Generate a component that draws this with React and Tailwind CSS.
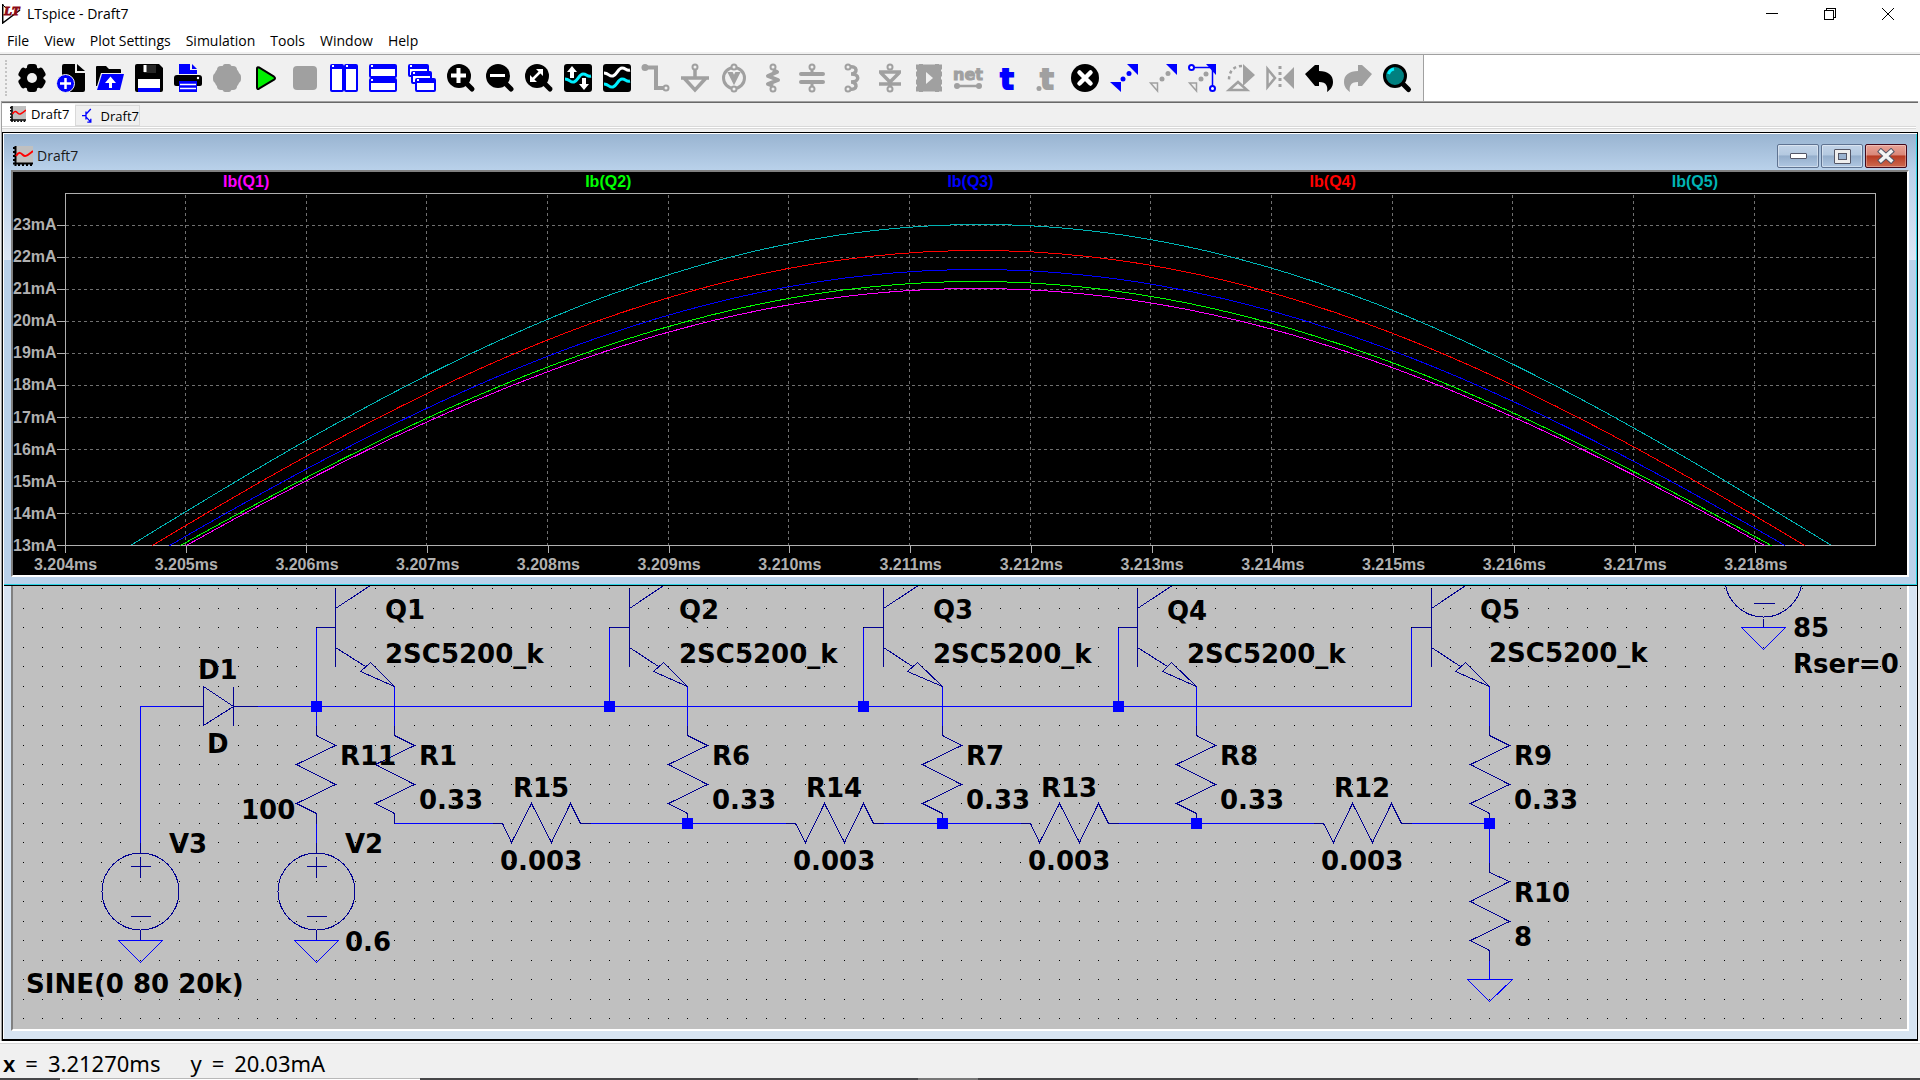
import { useState } from "react";
import clsx from "clsx";

const MENU = ["File", "View", "Plot Settings", "Simulation", "Tools", "Window", "Help"];

const INK = "#000";
const BLUE = "#0000ff";
const OFF = "#a0a0a0";
const NAVY = "#000090";

/* ── Toolbar icons, each on a 28 x 28 box ─────────────── */

const Magnifier = ({ children }) => (
  <>
    <path d="M17 17 25 25" stroke={INK} strokeWidth="5" strokeLinecap="round" />
    <circle cx="12" cy="12" r="12" fill={INK} />
    {children}
  </>
);

const SmallWindow = ({ x, y, w, h }) => (
  <>
    <rect x={x} y={y} width={w} height={h} rx="1" fill="#fff" stroke={BLUE} strokeWidth="2" />
    <path d={`M${x} ${y + 2}h${w}`} stroke={BLUE} strokeWidth="4" />
    <path d={`M${x + 1} ${y + 1}h2`} stroke="#fff" strokeWidth="2" />
  </>
);

const Pin = ({ x, y }) => (
  <circle cx={x} cy={y} r="2.5" fill="#f0f0f0" stroke={OFF} strokeWidth="2" />
);

const TOOLS = [
  {
    name: "Settings",
    art: (
      <>
        <circle cx="14" cy="14" r="11.5" />
        <rect x="9" width="10" height="28" rx="3" />
        <rect x="9" width="10" height="28" rx="3" transform="rotate(60 14 14)" />
        <rect x="9" width="10" height="28" rx="3" transform="rotate(120 14 14)" />
        <circle cx="14" cy="14" r="5" fill="#f0f0f0" />
      </>
    ),
  },
  {
    name: "New schematic",
    art: (
      <>
        <path d="M7 0h11v9h10v17a2 2 0 0 1-2 2H7a2 2 0 0 1-2-2V2a2 2 0 0 1 2-2z" />
        <path d="M20 0 28 7h-8z" />
        <circle cx="8.500" cy="19.500" r="9" fill={BLUE} stroke="#f0f0f0" />
        <path d="M8.500 14v11M3 19.500h11" stroke="#fff" strokeWidth="2.500" />
      </>
    ),
  },
  {
    name: "Open",
    art: (
      <>
        <path d="M0 3a1 1 0 0 1 1-1h9l3 3h11a1 1 0 0 1 1 1v3H5L1 22H0z" />
        <path d="M6 10h22l-4 16H1z" fill={BLUE} />
        <path d="M14.500 12.500 20 19h-4v5h-3v-5H9z" fill="#fff" />
      </>
    ),
  },
  {
    name: "Save",
    art: (
      <>
        <path d="M2 0h22l4 4v22a2 2 0 0 1-2 2H2a2 2 0 0 1-2-2V2a2 2 0 0 1 2-2z" />
        <path d="M9 1h12v8H9z" fill="#fff" opacity=".15" />
        <path d="M10 1v7" stroke="#fff" strokeWidth="3" />
        <path d="M3 15h22v9H3z" fill="#fff" />
        <path d="M3 24h22v4H3z" fill={BLUE} />
      </>
    ),
  },
  {
    name: "Print",
    art: (
      <>
        <path d="M5 0h11v6h7v4H5z" fill={BLUE} />
        <path d="M18 0 23 5h-5z" fill={BLUE} />
        <path d="M3 11h22a3 3 0 0 1 3 3v6a2 2 0 0 1-2 2H2a2 2 0 0 1-2-2v-6a3 3 0 0 1 3-3z" />
        <path d="M5 17h18v11H5z" fill={BLUE} />
        <path d="M6 20.500h16M6 24.500h16" stroke="#fff" strokeWidth="1.500" />
        <circle cx="24" cy="14" r="1.200" fill="#fff" />
      </>
    ),
  },
  {
    name: "Pause",
    art: (
      <g fill={OFF}>
        <circle cx="14" cy="14" r="13" />
        <rect x="4" y="2" width="20" height="24" rx="4" />
        <rect x="10" y="0" width="8" height="28" rx="2" />
        <rect x="0" y="9" width="28" height="10" rx="4" />
      </g>
    ),
  },
  {
    name: "Run",
    art: (
      <path
        d="M5 4.500v19q0 2 2 1.200l15-9q2-1.500 0-3L7 3.500q-2-.8-2 1z"
        fill="#00f000"
        stroke={INK}
        strokeWidth="2"
      />
    ),
  },
  { name: "Stop", art: <rect x="2" y="2" width="24" height="24" rx="4" fill={OFF} /> },
  {
    name: "Tile vertically",
    art: (
      <>
        <SmallWindow x={1} y={1} w={12} h={26} />
        <SmallWindow x={15} y={1} w={12} h={26} />
      </>
    ),
  },
  {
    name: "Tile horizontally",
    art: (
      <>
        <SmallWindow x={1} y={1} w={26} h={12} />
        <SmallWindow x={1} y={15} w={26} h={12} />
      </>
    ),
  },
  {
    name: "Cascade",
    art: (
      <>
        <SmallWindow x={1} y={1} w={19} h={11} />
        <SmallWindow x={4} y={8} w={19} h={11} />
        <SmallWindow x={8} y={15} w={19} h={12} />
      </>
    ),
  },
  {
    name: "Zoom in",
    art: (
      <Magnifier>
        <path d="M11.500 4v15M4 11.500h15" stroke="#fff" strokeWidth="4" />
      </Magnifier>
    ),
  },
  {
    name: "Zoom out",
    art: (
      <Magnifier>
        <path d="M4 11.500h15" stroke="#fff" strokeWidth="3" />
      </Magnifier>
    ),
  },
  {
    name: "Zoom to fit",
    art: (
      <Magnifier>
        <path d="M7 16 16 7" stroke="#fff" strokeWidth="2.500" />
        <path d="M11 5h7v7zM5 11v7h7z" fill="#fff" />
      </Magnifier>
    ),
  },
  {
    name: "Autorange",
    art: (
      <>
        <rect width="28" height="28" rx="3" />
        <path d="M1 15c5 0 5 4 9 3s5-8 9-8 4 3 8 2" fill="none" stroke="#00f0ff" strokeWidth="3" />
        <path d="M8 2l5 6h-3v6H6V8H3zM20 26l-5-6h3v-6h4v6h3z" fill="#fff" />
      </>
    ),
  },
  {
    name: "Plot traces",
    art: (
      <>
        <rect width="28" height="28" rx="3" />
        <path d="M1 9c5 0 5 4 9 3s5-8 9-8 4 3 8 2" fill="none" stroke="#fff" strokeWidth="3" />
        <path d="M1 20c5 0 5 4 9 3s5-8 9-8 4 3 8 2" fill="none" stroke="#00f0ff" strokeWidth="3" />
      </>
    ),
  },
  {
    name: "Wire",
    art: (
      <>
        <path d="M3 3.500h11V24h8" fill="none" stroke={OFF} strokeWidth="4" />
        <circle cx="3" cy="3.500" r="3.500" fill={OFF} />
        <Pin x={24} y={24} />
      </>
    ),
  },
  {
    name: "Ground",
    art: (
      <>
        <path d="M14 5v9M0 14h28M3 14 14 26 25 14" fill="none" stroke={OFF} strokeWidth="3.500" />
        <Pin x={14} y={3} />
      </>
    ),
  },
  {
    name: "Voltage",
    art: (
      <>
        <circle cx="14" cy="14" r="10.500" fill="none" stroke={OFF} strokeWidth="3" />
        <path d="M9 9l5 10 5-10h-3l-2 4-2-4z" fill={OFF} stroke={OFF} strokeWidth="2" />
        <Pin x={14} y={3} />
        <Pin x={14} y={25} />
      </>
    ),
  },
  {
    name: "Resistor",
    art: (
      <>
        <path d="M14 6 18 8 9 12 19 16 9 20 14 22" fill="none" stroke={OFF} strokeWidth="4" strokeLinejoin="round" />
        <Pin x={14} y={3} />
        <Pin x={14} y={25} />
      </>
    ),
  },
  {
    name: "Capacitor",
    art: (
      <>
        <path d="M3 10h22M3 18h22" stroke={OFF} strokeWidth="4" strokeLinecap="round" />
        <path d="M14 5v5M14 18v5" stroke={OFF} strokeWidth="3" />
        <Pin x={14} y={3} />
        <Pin x={14} y={25} />
      </>
    ),
  },
  {
    name: "Inductor",
    art: (
      <>
        <path d="M12 3c9-2 9 7 2 7 9 0 9 8 0 8 7 0 7 9-2 7" fill="none" stroke={OFF} strokeWidth="3.500" />
        <Pin x={11} y={3} />
        <Pin x={11} y={25} />
      </>
    ),
  },
  {
    name: "Diode",
    art: (
      <>
        <path d="M3 8h22M5 9l9 9 9-9M3 20h22M14 18v5" fill="none" stroke={OFF} strokeWidth="3.500" />
        <Pin x={14} y={3} />
        <Pin x={14} y={25} />
      </>
    ),
  },
  {
    name: "Component",
    art: (
      <>
        <path d="M2 2h24v24H2z" fill={OFF} />
        <path d="M1 3h26M1 10h26M1 18h26M1 25h26" stroke={OFF} strokeWidth="5" />
        <path d="M4 0h4v28H4zM20 0h4v28h-4z" fill={OFF} />
        <path d="M11 8v12l7-6z" fill="#f0f0f0" />
      </>
    ),
  },
  {
    name: "Label net",
    art: (
      <>
        <text x="14" y="16" textAnchor="middle" fill={OFF} fontSize="16" fontWeight="700" fontFamily="DejaVu Sans, sans-serif" stroke={OFF}>
          net
        </text>
        <path d="M3 22h22" stroke={OFF} strokeWidth="2.500" />
        <circle cx="3" cy="22" r="3" fill={OFF} />
        <circle cx="25" cy="22" r="3" fill={OFF} />
      </>
    ),
  },
  {
    name: "Text",
    art: (
      <text x="14" y="25" textAnchor="middle" fill={BLUE} stroke={BLUE} strokeWidth="2" fontSize="28" fontWeight="700" fontFamily="DejaVu Sans, sans-serif">
        t
      </text>
    ),
  },
  {
    name: "SPICE directive",
    art: (
      <>
        <text x="15" y="25" textAnchor="middle" fill={OFF} stroke={OFF} strokeWidth="2" fontSize="28" fontWeight="700" fontFamily="DejaVu Sans, sans-serif">
          t
        </text>
        <circle cx="7" cy="24.500" r="2.500" fill={OFF} />
      </>
    ),
  },
  {
    name: "Delete",
    art: (
      <>
        <circle cx="14" cy="14" r="14" />
        <path d="M8.500 8.500l11 11M19.500 8.500l-11 11" stroke="#fff" strokeWidth="4.500" strokeLinecap="round" />
      </>
    ),
  },
  {
    name: "Move",
    art: (
      <g fill={BLUE}>
        <path d="M17 0h11v11zM0 18h11v10z" />
        <circle cx="13" cy="15" r="2.500" />
        <circle cx="19" cy="9.500" r="2.500" />
      </g>
    ),
  },
  {
    name: "Copy",
    art: (
      <>
        <path d="M17 0h11v11z" fill={BLUE} />
        <path d="M1.500 19h7v8z" fill="none" stroke={OFF} strokeWidth="1.500" />
        <circle cx="13" cy="15" r="2.500" fill={OFF} />
        <circle cx="19" cy="9.500" r="2.500" fill={OFF} />
      </>
    ),
  },
  {
    name: "Drag",
    art: (
      <>
        <path d="M18 0h10v11z" fill={BLUE} />
        <path d="M3 3.500h21.500V24" fill="none" stroke={BLUE} strokeWidth="1.500" />
        <circle cx="3.500" cy="3.500" r="2.500" fill="#fff" stroke={BLUE} strokeWidth="2" />
        <circle cx="24.500" cy="24.500" r="2.500" fill="#fff" stroke={BLUE} strokeWidth="2" />
        <path d="M1.500 19h7v8z" fill="none" stroke={OFF} strokeWidth="1.500" />
        <circle cx="13" cy="15" r="2.500" fill={OFF} />
        <circle cx="18" cy="10" r="2.500" fill={OFF} />
      </>
    ),
  },
  {
    name: "Rotate",
    art: (
      <>
        <path d="M16 0 28 11 16 22z" fill={OFF} />
        <path d="M2 26 11 18l9 8z" fill="none" stroke={OFF} strokeWidth="2.500" />
        <path d="M15 2C7 2 2 7 2 16" fill="none" stroke={OFF} strokeWidth="2.500" strokeDasharray="3 3" />
      </>
    ),
  },
  {
    name: "Mirror",
    art: (
      <>
        <path d="M1.500 5v18L9 14z" fill="none" stroke={OFF} strokeWidth="2.500" />
        <path d="M28 3v22L17 14z" fill={OFF} />
        <path d="M14 2v24" stroke={OFF} strokeWidth="3" strokeDasharray="3 3" />
      </>
    ),
  },
  {
    name: "Undo",
    art: <path d="M0 10 10 1h4v6c9 0 14 4 14 11 0 5-3 8-6 10 1-5 0-10-8-10v4h-4z" />,
  },
  {
    name: "Redo",
    art: <path d="M28 10 18 1h-4v6C5 7 0 11 0 18c0 5 3 8 6 10-1-5 0-10 8-10v4h4z" fill={OFF} />,
  },
  {
    name: "Search",
    art: (
      <>
        <path d="M19 19 25.500 25.500" stroke={INK} strokeWidth="5" strokeLinecap="round" />
        <circle cx="12" cy="12" r="10.500" fill="#008080" stroke={INK} strokeWidth="3" />
        <path d="M5.500 10A7 7 0 0 1 11 5" fill="none" stroke="#00f0ff" strokeWidth="3" />
      </>
    ),
  },
];

const PlotIcon = ({ className }) => (
  <svg viewBox="0 0 20 20" className={className} aria-hidden="true">
    <path d="M3 0h17v17H3z" fill="#c0c0c0" />
    <path d="M2.500 0v20M0 17.500h20" stroke="#000" strokeWidth="2" fill="none" />
    <path d="M0 2h2M0 6h2M0 10h2M0 14h2M6 18v2M10 18v2M14 18v2M18 18v2" stroke="#000" strokeWidth="2" />
    <path d="M3 10c3-5 5-3 7-1s4 1 10-4" stroke="#f00" strokeWidth="2" fill="none" />
  </svg>
);

const NpnIcon = () => (
  <svg viewBox="0 0 12 16" className="w-3 h-4" fill="none" stroke={BLUE} strokeWidth="1.500" aria-hidden="true">
    <path d="M0 7.500h4M4.500 3v9M4.500 6 10 0M4.500 9 10 15M10 11v4H6" />
  </svg>
);

/* ── Waveform pane ────────────────────────────────────── */

const PLOT_W = 1811;
const PLOT_H = 353;

// y = top + a·d² − b·d⁴, d being the distance from the crest
const TRACES = [
  { label: "Ib(Q5)", color: "#00b4b4", cx: 916, top: 31, half: 850, a: 5.259e-4, b: 1.135e-10 },
  { label: "Ib(Q4)", color: "#ff0000", cx: 913.5, top: 57, half: 826.5, a: 5.002e-4, b: 9.96e-11 },
  { label: "Ib(Q3)", color: "#0000ff", cx: 912.3, top: 76, half: 808, a: 4.883e-4, b: 9.99e-11 },
  { label: "Ib(Q2)", color: "#00ff00", cx: 910.8, top: 88, half: 795.8, a: 4.868e-4, b: 1.1e-10 },
  { label: "Ib(Q1)", color: "#ff00ff", cx: 910.5, top: 95, half: 789.5, a: 4.722e-4, b: 9.56e-11 },
];

const LEGEND = [
  { label: "Ib(Q1)", className: "text-[#ff00ff]" },
  { label: "Ib(Q2)", className: "text-[#00ff00]" },
  { label: "Ib(Q3)", className: "text-[#0000ff]" },
  { label: "Ib(Q4)", className: "text-[#ff0000]" },
  { label: "Ib(Q5)", className: "text-[#00b4b4]" },
];

const AMPS = [23, 22, 21, 20, 19, 18, 17, 16, 15, 14, 13];
const TIMES = Array.from({ length: 15 }, (_, i) => (3.204 + i / 1000).toFixed(3));

function tracePoints({ cx, top, half, a, b }) {
  const steps = 60;
  return Array.from({ length: steps + 1 }, (_, i) => {
    const d = -half + (2 * half * i) / steps;
    const y = top + 0.5 + a * d * d - b * d ** 4;
    return `${(cx + d).toFixed(1)},${y.toFixed(1)}`;
  }).join(" ");
}

function Waveforms() {
  return (
    <svg
      viewBox={`0 0 ${PLOT_W} ${PLOT_H}`}
      preserveAspectRatio="none"
      className="block w-full h-full"
      shapeRendering="crispEdges"
      fill="none"
      role="img"
      aria-label="Base currents of Q1 to Q5"
    >
      <g stroke="#707070" strokeDasharray="3 3">
        {AMPS.slice(0, -1).map((mA, i) => (
          <path key={mA} d={`M1 ${32.5 + i * 32}H${PLOT_W}`} />
        ))}
        {TIMES.slice(1).map((t, i) => (
          <path key={t} d={`M${Math.floor((i + 1) * 120.65) + 0.5} 2V${PLOT_H}`} />
        ))}
      </g>
      <rect x="0.5" y="0.5" width={PLOT_W - 1} height={PLOT_H - 1} stroke="#b0b0b0" />
      {TRACES.map((trace) => (
        <polyline key={trace.label} points={tracePoints(trace)} stroke={trace.color} />
      ))}
    </svg>
  );
}

function PlotPane() {
  return (
    <div className="flex-1 min-h-0 flex flex-col bg-black pr-[31px] font-['Liberation_Sans',Arial,sans-serif] font-bold text-base leading-4 text-[#b0b0b0]">
      <div className="h-[21px] ml-[52px] grid grid-cols-5 pt-[2px] text-center">
        {LEGEND.map((item) => (
          <span key={item.label} className={item.className}>
            {item.label}
          </span>
        ))}
      </div>
      <div className="flex-1 min-h-0 flex">
        <div className="w-[52px] pt-6 -mb-2 flex flex-col justify-between">
          {AMPS.map((mA) => (
            <div key={mA} className="h-4 flex items-center justify-between">
              <span>{mA}mA</span>
              <span className="w-2 h-px bg-[#b0b0b0]" />
            </div>
          ))}
        </div>
        <div className="flex-1 min-w-0">
          <Waveforms />
        </div>
      </div>
      <div className="h-[29px] ml-[52px] grid grid-cols-15">
        {TIMES.map((t) => (
          <div key={t} className="w-px flex flex-col items-center gap-1">
            <span className="w-px h-[7px] bg-[#b0b0b0]" />
            <span>{t}ms</span>
          </div>
        ))}
      </div>
    </div>
  );
}

/* ── Schematic pane ───────────────────────────────────── */

// grid column / row -> pixel centre inside the sheet
const gx = (k) => Math.floor(10.1 + 19.555 * k) + 0.5;
const gy = (j) => Math.floor(2.75 + 19.545 * j) + 0.5;
const line = (...pts) => "M" + pts.map(([k, j]) => `${gx(k)} ${gy(j)}`).join("L");

const DOTS = Array.from({ length: 23 }, (_, j) =>
  Array.from({ length: 97 }, (_, k) => `M${gx(k) - 0.5} ${gy(j)}h1`).join("")
).join("");

const ZIGZAG = [[0, 0], [0, 0.5], [1, 1], [-1, 2], [1, 3], [-1, 4], [0, 4.5], [0, 5]];

const Resistor = ({ k, j, flat }) => (
  <path d={line(...ZIGZAG.map(([s, t]) => (flat ? [k + t, j - s] : [k + s, j + t])))} />
);

const Transistor = ({ k, j }) => (
  <>
    <path d={line([k, j], [k + 1, j])} />
    <path d={line([k + 1, j - 2], [k + 1, j + 2])} />
    <path d={line([k + 1, j - 1], [k + 4, j - 3])} />
    <path d={line([k + 1, j + 1.03], [k + 2.5, j + 2])} />
    <path d={line([k + 2.75, j + 1.78], [k + 2.25, j + 2.22], [k + 4, j + 3]) + "Z"} />
  </>
);

const Source = ({ k, j }) => (
  <>
    <circle cx={gx(k)} cy={gy(j + 2.5)} r="38.500" />
    <path d={line([k, j], [k, j + 0.5]) + line([k, j + 4.5], [k, j + 5])} />
    <path d={line([k - 0.53, j + 1.23], [k + 0.54, j + 1.23])} />
    <path d={line([k, j + 0.72], [k, j + 1.76])} />
    <path d={line([k - 0.53, j + 3.76], [k + 0.54, j + 3.76])} />
  </>
);

const Ground = ({ k, j }) => (
  <path d={line([k - 1.13, j], [k + 1.15, j], [k, j + 1.13]) + "Z"} />
);

const TRANSISTORS = [15, 30, 43, 56, 71];
const V_RESISTORS = [[15, 7], [19, 7], [34, 7], [47, 7], [60, 7], [75, 7], [75, 14]];
// drawn zigzag-down first, as a part rotated by 90 degrees
const H_RESISTORS = [24, 39, 51, 66];
const SOURCES = [[6, 13], [15, 13], [89, -3]];
const GROUNDS = [[6, 18], [15, 18], [89, 2], [75, 20]];
const JUNCTIONS = [[15, 6], [30, 6], [43, 6], [56, 6], [34, 12], [47, 12], [60, 12], [75, 12]];

const WIRES = [
  [[6, 13], [6, 6], [8, 6]],
  [[12, 6], [71, 6], [71, 2]],
  [[15, 2], [15, 7]],
  [[30, 2], [30, 6]],
  [[43, 2], [43, 6]],
  [[56, 2], [56, 6]],
  [[15, 12], [15, 13]],
  [[19, 5], [19, 7]],
  [[34, 5], [34, 7]],
  [[47, 5], [47, 7]],
  [[60, 5], [60, 7]],
  [[75, 5], [75, 7]],
  [[19, 12], [24, 12]],
  [[29, 12], [39, 12]],
  [[44, 12], [51, 12]],
  [[56, 12], [66, 12]],
  [[71, 12], [75, 12]],
  [[75, 12], [75, 14]],
  [[75, 19], [75, 20]],
];

// [text, left, baseline]
const LABELS = [
  ["Q1", 372, 33], ["2SC5200_k", 372, 77],
  ["Q2", 666, 33], ["2SC5200_k", 666, 77],
  ["Q3", 920, 33], ["2SC5200_k", 920, 77],
  ["Q4", 1154, 34], ["2SC5200_k", 1174, 77],
  ["Q5", 1467, 33], ["2SC5200_k", 1476, 76],
  ["D1", 185, 93], ["D", 194, 167],
  ["R11", 327, 179], ["100", 228, 233],
  ["R1", 406, 179], ["0.33", 406, 223],
  ["R6", 699, 179], ["0.33", 699, 223],
  ["R7", 953, 179], ["0.33", 953, 223],
  ["R8", 1207, 179], ["0.33", 1207, 223],
  ["R9", 1501, 179], ["0.33", 1501, 223],
  ["R10", 1501, 316], ["8", 1501, 360],
  ["R15", 500, 211], ["0.003", 487, 284],
  ["R14", 793, 211], ["0.003", 780, 284],
  ["R13", 1028, 211], ["0.003", 1015, 284],
  ["R12", 1321, 211], ["0.003", 1308, 284],
  ["V3", 156, 267], ["V2", 332, 267],
  ["0.6", 332, 365], ["SINE(0 80 20k)", 13, 407],
  ["85", 1780, 51], ["Rser=0", 1780, 87],
];

function Schematic() {
  return (
    <svg className="block w-full h-full" role="img" aria-label="Output stage schematic">
      <g fill="none" shapeRendering="crispEdges">
        <path d={DOTS} stroke="#000" />
        <g stroke={NAVY}>
          {TRANSISTORS.map((k) => (
            <Transistor key={k} k={k} j={2} />
          ))}
          {V_RESISTORS.map(([k, j]) => (
            <Resistor key={`${k}-${j}`} k={k} j={j} />
          ))}
          {H_RESISTORS.map((k) => (
            <path key={k} d={line(...ZIGZAG.map(([s, t]) => [k + t, 12 + s]))} />
          ))}
          {SOURCES.map(([k, j]) => (
            <Source key={k} k={k} j={j} />
          ))}
          {/* D1 */}
          <path d={line([8, 6], [9.24, 6]) + line([10.78, 6], [12, 6])} />
          <path d={line([9.24, 5], [9.24, 7], [10.78, 6]) + "Z"} />
          <path d={line([10.78, 5], [10.78, 7])} />
        </g>
        <g stroke={BLUE}>
          {WIRES.map((pts, i) => (
            <path key={i} d={line(...pts)} />
          ))}
          {GROUNDS.map(([k, j]) => (
            <Ground key={k} k={k} j={j} />
          ))}
        </g>
        {JUNCTIONS.map(([k, j]) => (
          <rect key={`${k}-${j}`} x={gx(k) - 5.5} y={gy(j) - 5.5} width="11" height="11" fill={BLUE} />
        ))}
      </g>
      <g className="font-['DejaVu_Sans',Verdana,sans-serif] font-bold text-[26px]" fill="#000">
        {LABELS.map(([text, x, y], i) => (
          <text key={i} x={x} y={y}>
            {text}
          </text>
        ))}
      </g>
    </svg>
  );
}

/* ── Window chrome ────────────────────────────────────── */

function TitleBar() {
  return (
    <header className="h-7 flex items-center bg-white pr-[3px]">
      <svg viewBox="0 0 20 20" className="w-5 h-5 ml-[2px]" aria-hidden="true">
        <path d="M.7 0v19L18 6" fill="none" stroke="#000" strokeWidth="1.500" />
        <path d="M1 1 4 4" stroke="#000" />
        <text x="2" y="11" fontSize="13" fontWeight="700" fontStyle="italic" fontFamily="Liberation Serif, serif" fill="#8c0a14" stroke="#8c0a14">
          LT
        </text>
      </svg>
      <h1 className="flex-1 ml-[5px] text-sm">LTspice - Draft7</h1>
      <button aria-label="Minimize" className="w-[58px] h-7 flex items-center justify-center">
        <svg className="w-3 h-3" fill="none" stroke="#000" shapeRendering="crispEdges">
          <path d="M0 5.500h12" />
        </svg>
      </button>
      <button aria-label="Restore" className="w-[58px] h-7 flex items-center justify-center">
        <svg className="w-3 h-3" fill="none" stroke="#000" shapeRendering="crispEdges">
          <path d="M.5 2.500h9v9h-9zM2.500 2V.5h9v9H10" />
        </svg>
      </button>
      <button aria-label="Close" className="w-[58px] h-7 flex items-center justify-center">
        <svg className="w-3 h-3" fill="none" stroke="#000">
          <path d="M0 0 12 12M12 0 0 12" />
        </svg>
      </button>
    </header>
  );
}

function ToolBar() {
  return (
    <div className="bg-white border-t border-[#a0a0a0] flex">
      <div
        role="toolbar"
        aria-label="Main"
        className="h-[46px] flex items-center gap-[11px] bg-[#f0f0f0] border-r border-[#a0a0a0] pl-[5px] pr-3"
      >
        <span className="h-9 border-l-2 border-dotted border-[#c4c4c4]" />
        {TOOLS.map((tool) => (
          <button key={tool.name} title={tool.name} aria-label={tool.name} className="w-7 h-7 shrink-0">
            <svg viewBox="0 0 28 28" className="w-7 h-7 overflow-visible">
              {tool.art}
            </svg>
          </button>
        ))}
      </div>
    </div>
  );
}

function Tabs({ active, onSelect }) {
  const tabs = [<PlotIcon key="plot" className="w-4 h-4" />, <NpnIcon key="npn" />];
  return (
    <div className="h-[29px] bg-[#f0f0f0] pt-px pr-[2px]">
      <div role="tablist" className="flex items-end h-[22px]">
        {tabs.map((icon, i) => (
          <button
            key={i}
            role="tab"
            aria-selected={active === i}
            onClick={() => onSelect(i)}
            className={clsx(
              "flex items-center text-[13px] leading-5",
              active === i
                ? "h-[22px] w-[73px] pl-2 pb-[2px] gap-[5px] bg-white"
                : "h-[21px] w-[65px] pl-[6px] gap-2 border border-[#d9d9d9]"
            )}
          >
            {icon}
            Draft7
          </button>
        ))}
      </div>
      <div className="h-[3px] bg-white border-y border-[#d9d9d9]" />
    </div>
  );
}

const CAPTION =
  "w-[42px] h-6 flex items-center justify-center rounded-[2px] border border-[#5f7391] bg-[linear-gradient(#c3d4e8,#b4c9e0_45%,#94aecb_50%,#b0c7e2)] ring-1 ring-inset ring-white/40";

function PlotWindow() {
  return (
    <section
      aria-label="Draft7 waveforms"
      className="min-h-0 flex flex-col border-t border-l border-t-white border-l-white bg-[linear-gradient(#99b4d1,#b9d1ea_36px,#dce6f4_126px,#b9d1ea_126px)]"
    >
      <div className="flex-1 min-h-0 flex flex-col border-r border-b border-[#2bd3e4] pl-[7px] pr-[7px] pb-[7px]">
        <div className="h-9 flex items-center pt-2">
          <PlotIcon className="w-5 h-5 ml-[2px]" />
          <h2 className="flex-1 ml-1 text-sm text-[#1a1a1a]">Draft7</h2>
          <div className="flex gap-[2px] mr-[2px]">
            <button aria-label="Minimize plot" className={CAPTION}>
              <span className="w-[17px] h-[6px] rounded-[1px] border border-[#535666] bg-white" />
            </button>
            <button aria-label="Maximize plot" className={CAPTION}>
              <span className="w-[17px] h-[15px] rounded-[1px] border border-[#535666] bg-[#eee] flex items-center justify-center">
                <span className="w-[9px] h-[7px] border border-[#535666] bg-[#9ab2cf]" />
              </span>
            </button>
            <button
              aria-label="Close plot"
              className="w-[42px] h-6 flex items-center justify-center rounded-[2px] border border-[#430719] bg-[linear-gradient(#e9a397,#d98779_45%,#b83a22_50%,#cd6a50)] ring-1 ring-inset ring-white/30"
            >
              <svg viewBox="0 0 18 16" className="w-[18px] h-4" strokeLinecap="square">
                <path d="M4 3.500 14 12.500M14 3.500 4 12.500" stroke="#535666" strokeWidth="5.500" />
                <path d="M4 3.500 14 12.500M14 3.500 4 12.500" stroke="#f4f4f4" strokeWidth="3.500" />
              </svg>
            </button>
          </div>
        </div>
        <div className="flex-1 min-h-0 flex flex-col border-2 border-t-[#808080] border-l-[#808080] border-r-white border-b-white">
          <PlotPane />
        </div>
      </div>
      <div className="h-px bg-black" />
    </section>
  );
}

function SchematicWindow() {
  return (
    <section
      aria-label="Draft7 schematic"
      className="min-h-0 flex border-l border-l-white border-r border-r-[#dfe9f4] bg-[#d7e4f2] px-[7px] pb-2"
    >
      <div className="flex-1 min-w-0 overflow-hidden bg-[#c0c0c0] border-2 border-t-0 border-l-[#808080] border-r-white border-b-white">
        <Schematic />
      </div>
    </section>
  );
}

function StatusBar() {
  return (
    <footer className="h-[39px] flex flex-col bg-[#f0f0f0] border-t-2 border-white">
      <div className="flex-1 flex items-center gap-[30px] border-t border-[#d7d7d7] pl-[3px] pt-1 font-['Noto_Sans','Open_Sans',sans-serif] text-[22px] leading-7">
        <span className="flex gap-[10px]">
          <span className="font-semibold">x</span>
          <span>=</span>
          <span>3.21270ms</span>
        </span>
        <span className="flex gap-[10px]">
          <span>y</span>
          <span>=</span>
          <span>20.03mA</span>
        </span>
      </div>
      {/* sliver of the task bar */}
      <div className="h-[2px] flex bg-[#464648]">
        <span className="ml-[60px] w-[360px] border-t border-[#b8b8b8] bg-white" />
        <span className="ml-[498px] w-[60px] bg-[#777]" />
      </div>
    </footer>
  );
}

export default function App() {
  const [tab, setTab] = useState(0);

  return (
    <div className="h-screen flex flex-col overflow-hidden bg-[#f0f0f0] text-black font-['Open_Sans','Noto_Sans',sans-serif]">
      <TitleBar />
      <nav className="h-6 flex items-center gap-px pt-[2px] bg-white text-sm">
        {MENU.map((item) => (
          <button key={item} className="px-[7px] leading-5">
            {item}
          </button>
        ))}
      </nav>
      <div className="h-[2px] bg-[#f0f0f0]" />
      <ToolBar />
      <main className="flex-1 min-h-0 ml-px mr-[2px] flex flex-col border-l border-[#a0a0a0]">
        <div className="h-[2px] bg-[#696969] border-t border-[#a0a0a0]" />
        <Tabs active={tab} onSelect={setTab} />
        <div className="flex-1 min-h-0 grid grid-rows-2 border-x border-t border-b-2 border-black">
          <PlotWindow />
          <SchematicWindow />
        </div>
      </main>
      <StatusBar />
    </div>
  );
}
